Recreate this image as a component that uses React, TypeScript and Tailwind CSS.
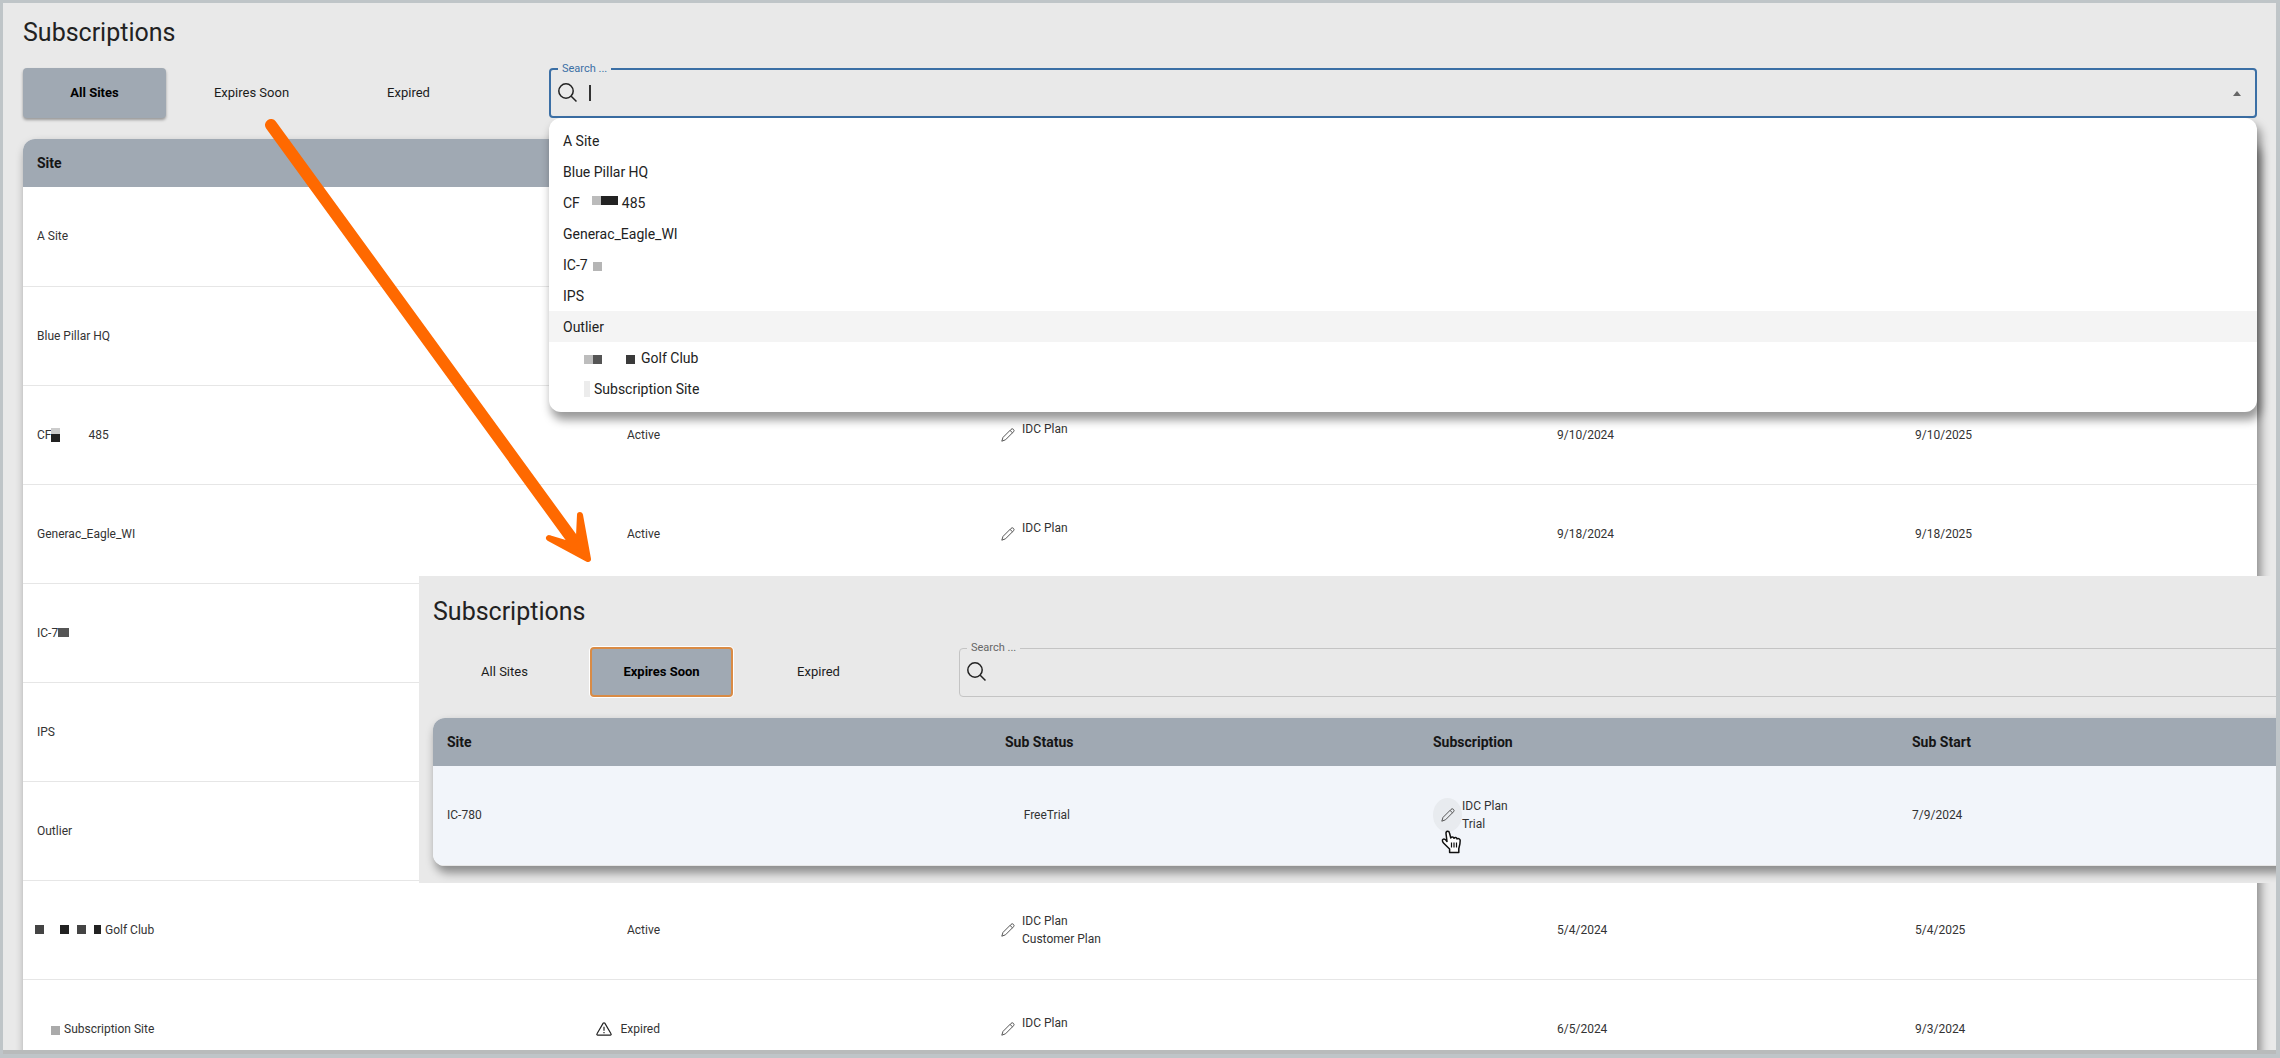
import { ReactNode } from "react";
import { clsx } from "clsx";

const SearchIcon = () => (
  <svg width="20" height="20" viewBox="0 0 20 20" fill="none" stroke="#222" strokeWidth="1.5">
    <circle cx="8" cy="8" r="7.2" />
    <path d="M13.2 13.2 18.5 18.500" />
  </svg>
);

const PencilIcon = () => (
  <svg width="14" height="14" viewBox="0 0 14 14" fill="none" stroke="#555" strokeWidth="1">
    <path d="M.8 13.2 2 9.4l8-8a1.6 1.6 0 0 1 2.5 2.4l-8 8z" />
    <path d="m9 2.4 2.500 2.400" />
  </svg>
);

const WarningIcon = () => (
  <svg width="16" height="14" viewBox="0 0 16 14" fill="none" stroke="#222" strokeWidth="1.2">
    <path d="M7.2 1.200a1 1 0 0 1 1.600 0l6.200 10.600a.9.9 0 0 1-.8 1.400H1.800A.9.9 0 0 1 1 11.800z" />
    <path d="M8 4.800v4M8 10v1.300" />
  </svg>
);

const HandCursor = () => (
  <svg width="21" height="24" viewBox="0 0 21 24" fill="#fff" stroke="#111" strokeWidth="1.5" strokeLinejoin="round">
    <path d="M8.600 22.500V19L3 13.500C1.500 12 .8 10 2 9.300c1.300-.7 3 .7 4 2.200l-1-8C4.800.6 8 .4 8.500 3l1.300 5c.7-1.400 2.700-1.200 3.200.2 1-1.200 2.800-.8 3 .7 1.500-.9 3.200.1 3.200 1.600 0 3.500-.7 5.500-1.400 8v4z" />
    <path d="M10.500 12.500v5M13 12.500v5M15.500 12.500v5" strokeWidth="1.200" />
  </svg>
);

// Blanked-out part of a name: fixed width, filled or empty
const Mask = ({ className }: { className: string }) => (
  <span className={clsx("inline-block", className)} />
);

const Tabs = ({ active, focused }: { active: string; focused?: boolean }) => (
  <div className="flex shrink-0 gap-3.5 w-[526px]">
    {["All Sites", "Expires Soon", "Expired"].map((tab) => (
      <button
        key={tab}
        type="button"
        className={clsx(
          "w-[143px] h-[50px] rounded text-[13px] text-[#1c1c1c]",
          tab === active && "bg-[#a0a9b3] font-bold text-black",
          tab === active && !focused && "shadow-[0_2px_3px_rgba(0,0,0,0.35)]",
          tab === active && focused && "border-2 border-[#d98b45] shadow-[0_0_0_1px_#fff]"
        )}
      >
        {tab}
      </button>
    ))}
  </div>
);

const SearchBox = ({ id, open, children }: { id: string; open?: boolean; children?: ReactNode }) => (
  <div className="relative grow">
    <fieldset
      className={clsx(
        "h-[54px] -mt-1 rounded pl-[7px]",
        open ? "border-2 border-[#3b6fa5]" : "border border-[#c4c4c4]"
      )}
    >
      <legend className={clsx("px-1 h-2.5 text-[11px] leading-[10px]", open ? "text-[#3b6fa5]" : "text-[#666]")}>
        <label htmlFor={id}>Search ...</label>
      </legend>
      <div className="flex items-center h-[38px] gap-[11px]">
        <SearchIcon />
        {open && <span className="w-[2px] h-4 bg-[#333]" />}
        <input id={id} type="text" className="grow h-8 bg-transparent text-sm outline-none" />
        {open && (
          <button type="button" aria-label="Close" className="mr-3.5">
            <svg width="8" height="5" viewBox="0 0 8 5" fill="#666">
              <path d="M0 5 4 0l4 5z" />
            </svg>
          </button>
        )}
      </div>
    </fieldset>
    {children}
  </div>
);

const options: ReactNode[] = [
  "A Site",
  "Blue Pillar HQ",
  <>
    CF
    <Mask className="w-3" />
    <Mask className="w-[9px] h-[9px] mb-1 bg-[#bbb]" />
    <Mask className="w-[17px] h-[9px] mb-1 mr-1 bg-[#222]" />
    485
  </>,
  "Generac_Eagle_WI",
  <>
    IC-7
    <Mask className="w-[5px]" />
    <Mask className="w-[9px] h-[9px] -mb-1 bg-[#b5b5b5]" />
  </>,
  "IPS",
  "Outlier",
  <>
    <Mask className="w-[21px]" />
    <Mask className="w-[9px] h-[9px] -mb-1 bg-[#bdbdbd]" />
    <Mask className="w-[9px] h-[9px] -mb-1 bg-[#555]" />
    <Mask className="w-6" />
    <Mask className="w-[9px] h-[9px] -mb-1 mr-1.5 bg-[#3a3a3a]" />
    Golf Club
  </>,
  <>
    <Mask className="w-[21px]" />
    <Mask className="w-1.5 h-4 mr-1 bg-[#ececec]" />
    Subscription Site
  </>,
];

const Dropdown = () => (
  <ul className="absolute top-[50px] inset-x-0 z-10 pt-[7px] pb-2 rounded-xl bg-white text-sm text-[#222] shadow-[3px_7px_10px_1px_rgba(0,0,0,0.4)]">
    {options.map((option, i) => (
      <li key={i} className={clsx("flex items-center h-[31px] px-3.5", i === 6 && "bg-[#f4f4f4]")}>
        {option}
      </li>
    ))}
  </ul>
);

type Row = {
  site: ReactNode;
  status?: string;
  plans?: string[];
  dates?: string[];
};

const sites: Row[] = [
  { site: "A Site" },
  { site: "Blue Pillar HQ" },
  {
    site: (
      <>
        CF
        <Mask className="w-[9px] h-3.5 mr-7 bg-linear-to-b from-[#ccc] from-40% to-[#222] to-40%" />
        485
      </>
    ),
    status: "Active",
    plans: ["IDC Plan"],
    dates: ["9/10/2024", "9/10/2025"],
  },
  { site: "Generac_Eagle_WI", status: "Active", plans: ["IDC Plan"], dates: ["9/18/2024", "9/18/2025"] },
  {
    site: (
      <>
        IC-7
        <Mask className="w-[11px] h-[9px] bg-[#555]" />
      </>
    ),
  },
  { site: "IPS" },
  { site: "Outlier" },
  {
    site: (
      <>
        <Mask className="w-[9px] h-[9px] -ml-0.5 mr-4 bg-[#444]" />
        <Mask className="w-[9px] h-[9px] mr-2 bg-[#222]" />
        <Mask className="w-[9px] h-[9px] mr-2 bg-[#444]" />
        <Mask className="w-[7px] h-[9px] mr-1 bg-[#222]" />
        Golf Club
      </>
    ),
    status: "Active",
    plans: ["IDC Plan", "Customer Plan"],
    dates: ["5/4/2024", "5/4/2025"],
  },
  {
    site: (
      <>
        <Mask className="w-[9px] h-[9px] ml-3.5 mr-1 -mb-1 bg-[#aaa]" />
        Subscription Site
      </>
    ),
    status: "Expired",
    plans: ["IDC Plan"],
    dates: ["6/5/2024", "9/3/2024"],
  },
];

const expiring: Row[] = [
  { site: "IC-780", status: "FreeTrial", plans: ["IDC Plan", "Trial"], dates: ["7/9/2024"] },
];

type TableProps = { heads: string[]; cols: string[]; rows: Row[]; hovered?: boolean };

const SitesTable = ({ heads, cols, rows, hovered }: TableProps) => (
  <div className="mt-[21px] rounded-xl bg-white shadow-[3px_6px_10px_1px_rgba(0,0,0,0.4)] overflow-hidden">
    <table className="w-full table-fixed text-left text-[#333]">
      <colgroup>
        {cols.map((col, i) => (
          <col key={i} className={col} />
        ))}
      </colgroup>
      <thead className="bg-[#a0a9b3] text-sm text-[#161616]">
        <tr className="h-12">
          {heads.map((head, i) => (
            <th key={i} className="pl-3.5 font-bold">
              {head}
            </th>
          ))}
        </tr>
      </thead>
      <tbody className="text-xs">
        {rows.map((row, i) => (
          <tr key={i} className={clsx("h-[99px] border-b border-[#e6e6e6]", hovered && "bg-[#f2f5fa]")}>
            <td className="pl-3.5">
              <div className="flex items-center">{row.site}</div>
            </td>
            <td className="pl-3.5">
              {row.status && (
                <div className="flex items-center justify-end w-[65px] gap-2">
                  {row.status === "Expired" && <WarningIcon />}
                  {row.status}
                </div>
              )}
            </td>
            <td className="pl-3.5">
              {row.plans && (
                <div className="flex items-center">
                  <button
                    type="button"
                    aria-label="Edit subscription"
                    className={clsx(
                      "relative flex items-center justify-center w-[29px] h-[34px] rounded-[50%]",
                      hovered && "bg-[#e8ebef]"
                    )}
                  >
                    <PencilIcon />
                    {hovered && (
                      <span className="absolute top-8 left-2">
                        <HandCursor />
                      </span>
                    )}
                  </button>
                  <div className="min-h-[30px] leading-[18px]">
                    {row.plans.map((plan) => (
                      <p key={plan}>{plan}</p>
                    ))}
                  </div>
                </div>
              )}
            </td>
            {heads.slice(3).map((_, d) => (
              <td key={d} className="pl-3.5">
                {row.dates?.[d]}
              </td>
            ))}
          </tr>
        ))}
      </tbody>
    </table>
  </div>
);

const Arrow = () => (
  <svg
    className="absolute left-[257px] top-[113px] z-20"
    width="336"
    height="450"
    viewBox="260 116 336 450"
    fill="#ff6900"
    stroke="#ff6900"
    strokeLinecap="round"
    strokeLinejoin="round"
  >
    <path d="M271 125 573 540" strokeWidth="12" />
    <path d="M549 538 569 544 579 536 580 515 588 559z" strokeWidth="6" />
  </svg>
);

export default function App() {
  return (
    <div className="relative h-screen overflow-hidden border-[3px] border-r-4 border-b-4 border-[#bfc5c8] bg-[#b9bbbb] pb-1 font-['Roboto',sans-serif]">
      <main className="h-full overflow-hidden bg-[#e9e9e9] pl-5 pr-[19px] pt-[13px]">
        <h1 className="text-[25px] leading-[34px] text-[#222]">Subscriptions</h1>
        <div className="flex mt-[18px]">
          <Tabs active="All Sites" />
          <SearchBox id="search" open>
            <Dropdown />
          </SearchBox>
        </div>
        <SitesTable
          heads={["Site", "", "", "", ""]}
          cols={["w-[558px]", "w-[398px]", "w-[564px]", "w-[358px]", "w-auto"]}
          rows={sites}
        />
      </main>

      <section className="absolute left-[416px] right-0 top-[573px] z-10 h-[307px] overflow-hidden bg-[#e9e9e9] pl-3.5 pt-[19px]">
        <div className="-mr-5">
          <h2 className="text-[25px] leading-[34px] text-[#222]">Subscriptions</h2>
          <div className="flex mt-[18px]">
            <Tabs active="Expires Soon" focused />
            <SearchBox id="search-expiring" />
          </div>
          <SitesTable
            heads={["Site", "Sub Status", "Subscription", "Sub Start"]}
            cols={["w-[558px]", "w-[428px]", "w-[479px]", "w-auto"]}
            rows={expiring}
            hovered
          />
        </div>
      </section>

      <Arrow />
    </div>
  );
}
